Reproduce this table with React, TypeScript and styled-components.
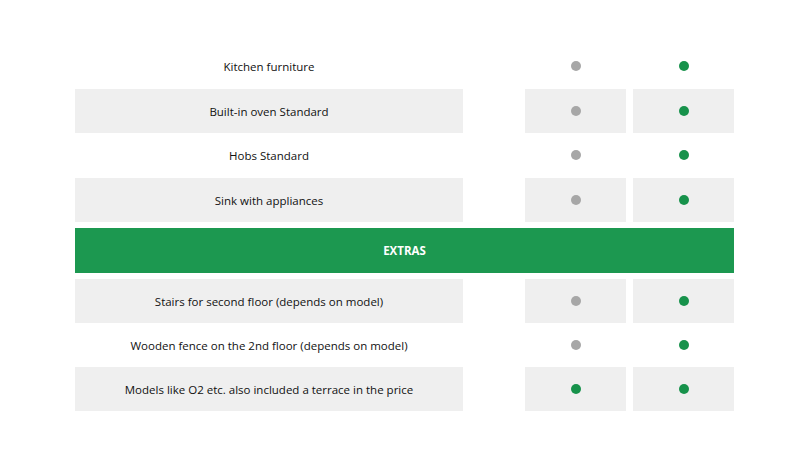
import React from 'react';
import styled, { createGlobalStyle } from 'styled-components';

type Mark = 'no' | 'yes';

interface Feature {
    label: string;
    marks: [Mark, Mark];
}

const KITCHEN: Feature[] = [
    { label: 'Kitchen furniture', marks: ['no', 'yes'] },
    { label: 'Built-in oven Standard', marks: ['no', 'yes'] },
    { label: 'Hobs Standard', marks: ['no', 'yes'] },
    { label: 'Sink with appliances', marks: ['no', 'yes'] },
];

const EXTRAS: Feature[] = [
    { label: 'Stairs for second floor (depends on model)', marks: ['no', 'yes'] },
    { label: 'Wooden fence on the 2nd floor (depends on model)', marks: ['no', 'yes'] },
    { label: 'Models like O2 etc. also included a terrace in the price', marks: ['yes', 'yes'] },
];

// shadeFirst: whether the first row of the group gets the grey background
const FeatureRows = ({ items, shadeFirst, rowHeight }: { items: Feature[]; shadeFirst: boolean; rowHeight: number }) => (
    <>
        {items.map((item, i) => (
            <Row key={item.label} shaded={(i % 2 === 0) === shadeFirst} h={rowHeight}>
                <Label>{item.label}</Label>
                <Marks>
                    {item.marks.map((m, j) => (
                        <MarkCell key={j}>
                            <Dot on={m === 'yes'} />
                        </MarkCell>
                    ))}
                </Marks>
            </Row>
        ))}
    </>
);

const App = () => {
    return (
        <>
            <GlobalStyle />
            <Page>
                <Table>
                    <FeatureRows items={KITCHEN} shadeFirst={false} rowHeight={44.5} />
                    <SectionBar>EXTRAS</SectionBar>
                    <FeatureRows items={EXTRAS} shadeFirst={true} rowHeight={44} />
                </Table>
            </Page>
        </>
    );
};

export default App;

// ---------------------------
const GlobalStyle = createGlobalStyle`
  html, body {
    margin: 0;
    background: #ffffff;
  }
  body {
    font-family: "Open Sans", "Liberation Sans", sans-serif;
    color: #111111;
  }
`

const Page = styled.div`
  width: 809px;
  height: 455px;
  padding: 44px 0 0 75px;
  box-sizing: border-box;
`

const Table = styled.div`
  width: 659px;
  display: flex;
  flex-direction: column;
`

const Row = styled.div<{ shaded?: boolean; h: number }>`
  display: flex;
  justify-content: space-between;
  height: ${props => props.h}px;
  --cell-bg: ${props => props.shaded ? '#efefef' : 'transparent'};
`

const Label = styled.div`
  width: 388px;
  display: flex;
  align-items: center;
  justify-content: center;
  background: var(--cell-bg);
  font-size: 11.5px;
  padding-top: 1px;
  box-sizing: border-box;
`

const Marks = styled.div`
  display: flex;
  gap: 7px;
`

const MarkCell = styled.div`
  width: 101px;
  display: flex;
  align-items: center;
  justify-content: center;
  background: var(--cell-bg);
`

const Dot = styled.span<{ on?: boolean }>`
  width: 10px;
  height: 10px;
  border-radius: 50%;
  background: ${props => props.on ? '#17924b' : '#a7a7a7'};
`

const SectionBar = styled.div`
  height: 45px;
  margin: 5.5px 0 6.5px;
  background: #1c9850;
  color: #ffffff;
  font-size: 11.5px;
  font-weight: 700;
  display: flex;
  align-items: center;
  justify-content: center;
`
